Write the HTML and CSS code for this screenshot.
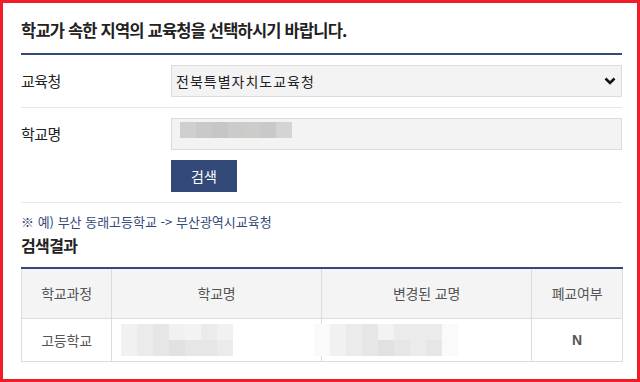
FILE: index.html
```html
<!DOCTYPE html>
<html lang="ko">
<head>
<meta charset="utf-8">
<link rel="stylesheet" href="styles.css">
</head>
<body>
<div class="frame">
  <h1 class="title">학교가 속한 지역의 교육청을 선택하시기 바랍니다.</h1>
  <div class="form">
    <div class="row row-first">
      <div class="label">교육청</div>
      <div class="field">
        <div class="select-wrap">
          <select class="select">
            <option>전북특별자치도교육청</option>
          </select>
          <svg class="chev" width="12" height="8" viewBox="0 0 12 8"><path d="M1.5 1.5 L6 6 L10.5 1.5" fill="none" stroke="#111" stroke-width="2.6"/></svg>
        </div>
      </div>
    </div>
    <div class="row row-second">
      <div class="label">학교명</div>
      <div class="field">
        <div class="input">
          <div class="mosaic mosaic-input">
            <span class="c1"></span><span class="c2"></span><span class="c3"></span><span class="c4"></span><span class="c5"></span><span class="c6"></span><span class="c7"></span>
          </div>
        </div>
        <button class="btn">검색</button>
      </div>
    </div>
  </div>
  <p class="note">※ 예) 부산 동래고등학교 -&gt; 부산광역시교육청</p>
  <h2 class="sub">검색결과</h2>
  <table class="result">
    <colgroup><col class="w1"><col class="w2"><col class="w3"><col class="w4"></colgroup>
    <thead>
      <tr><th>학교과정</th><th>학교명</th><th>변경된 교명</th><th>폐교여부</th></tr>
    </thead>
    <tbody>
      <tr>
        <td>고등학교</td>
        <td class="blur-cell">
          <div class="mosaic mosaic-a">
            <span class="t1"></span><span class="t2"></span><span class="t3"></span><span class="t1"></span><span class="t4"></span><span class="t2"></span><span class="t1"></span>
            <span class="t1"></span><span class="t2"></span><span class="t3"></span><span class="t5"></span><span class="t3"></span><span class="t3"></span><span class="t2"></span>
          </div>
        </td>
        <td class="blur-cell">
          <div class="mosaic mosaic-b">
            <span class="t0"></span><span class="t1"></span><span class="t2"></span><span class="t3"></span><span class="t4"></span><span class="t2"></span><span class="t2"></span><span class="t2"></span><span class="t0"></span>
            <span class="t0"></span><span class="t1"></span><span class="t2"></span><span class="t3"></span><span class="t5"></span><span class="t3"></span><span class="t2"></span><span class="t3"></span><span class="t0"></span>
          </div>
        </td>
        <td class="strong">N</td>
      </tr>
    </tbody>
  </table>
</div>
</body>
</html>
```

FILE: styles.css
```css
* { box-sizing: border-box; }
html, body { margin: 0; padding: 0; background: #fff; }
body {
  font-family: "Noto Sans CJK KR", "Noto Sans", sans-serif;
  color: #222;
}
.frame {
  width: 640px;
  height: 382px;
  border: 3px solid #ee1d27;
  padding: 0 15px 0 18px;
  overflow: hidden;
}
.title {
  margin: 0;
  height: 52px;
  padding-top: 15px;
  font-size: 16.5px;
  line-height: 24px;
  font-weight: 700;
  letter-spacing: -0.8px;
  color: #222;
  border-bottom: 2px solid #34497a;
}
.row {
  display: flex;
  border-bottom: 1px solid #e8e8e8;
  padding: 10px 0;
}
.label {
  width: 150px;
  flex: none;
  height: 32px;
  line-height: 32px;
  font-size: 15px;
  letter-spacing: -0.6px;
  color: #222;
}
.field {
  flex: 1;
  display: flex;
  flex-direction: column;
  gap: 10px;
  align-items: flex-start;
}
.select-wrap {
  position: relative;
  width: 100%;
}
.select {
  -webkit-appearance: none;
  appearance: none;
  display: block;
  width: 100%;
  height: 32px;
  margin: 0;
  border: 1px solid #dcdcdc;
  border-radius: 0;
  background: #f3f3f3;
  padding: 0 0 0 4px;
  font-family: "Noto Sans CJK KR", sans-serif;
  font-size: 14px;
  letter-spacing: 1px;
  color: #222;
  outline: none;
}
.chev {
  position: absolute;
  right: 6px;
  top: 12px;
}
.input {
  width: 100%;
  height: 32px;
  border: 1px solid #dcdcdc;
  background: #f3f3f3;
  padding: 3px 0 0 8px;
}
.btn {
  width: 66px;
  height: 32px;
  border: 0;
  border-radius: 0;
  background: #334a79;
  color: #fff;
  font-family: "Noto Sans CJK KR", sans-serif;
  font-size: 14px;
  padding: 0;
}
.mosaic { display: grid; }
.mosaic span { display: block; }
.mosaic-input {
  grid-template-columns: repeat(7, 16px);
  grid-template-rows: 16px;
}
.c1 { background: #cfcfcf; }
.c2 { background: #c9c9c9; }
.c3 { background: #c6c6c6; }
.c4 { background: #cbcbcb; }
.c5 { background: #cbcdc9; }
.c6 { background: #c8c9c8; }
.c7 { background: #d3d4d3; }
.note {
  margin: 0;
  padding-top: 10px;
  height: 32px;
  font-size: 13px;
  line-height: 18px;
  letter-spacing: 0;
  color: #34497a;
}
.sub {
  margin: 0;
  height: 32px;
  font-size: 16px;
  line-height: 20px;
  font-weight: 700;
  letter-spacing: -0.6px;
  color: #222;
}
.result {
  width: 601px;
  border-collapse: collapse;
  table-layout: fixed;
  border-top: 2px solid #34497a;
}
.w1 { width: 90px; }
.w2 { width: 210px; }
.w3 { width: 210px; }
.w4 { width: 91px; }
.result th, .result td {
  border: 1px solid #dcdcdc;
  text-align: center;
  font-size: 14px;
  font-weight: 400;
  color: #555;
  letter-spacing: -0.2px;
  padding: 0;
}
.result th {
  height: 50px;
  background: #f4f4f4;
  border-top: 0;
}
.result td { height: 43px; }
.result td.strong { font-weight: 700; font-family: "Liberation Sans", sans-serif; }
.mosaic-a {
  grid-template-columns: repeat(7, 16px);
  grid-template-rows: 16px 16px;
  margin-left: 9px;
}
.mosaic-b {
  grid-template-columns: repeat(9, 16px);
  grid-template-rows: 16px 16px;
  margin-left: -8px;
}
.t0 { background: #fafafa; }
.t1 { background: #f1f1f1; }
.t2 { background: #ebebeb; }
.t3 { background: #e6e6e6; }
.t4 { background: #f3f3f3; }
.t5 { background: #e1e1e1; }
```
